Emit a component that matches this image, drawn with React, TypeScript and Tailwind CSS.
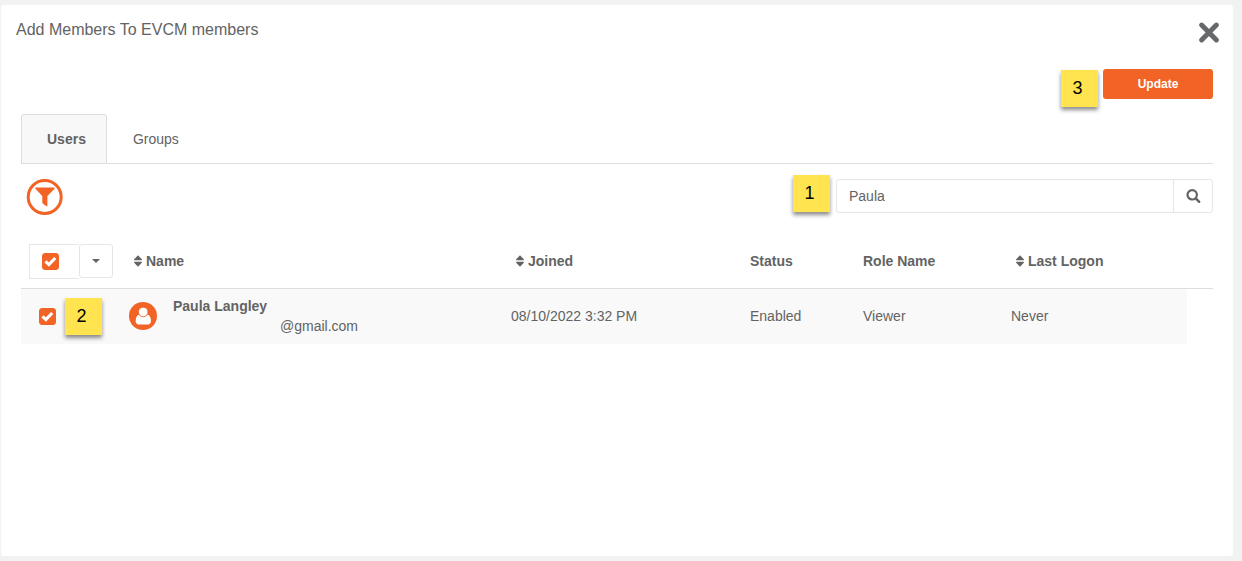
import { useState } from "react";
import type { ReactNode } from "react";

function CloseIcon() {
  return (
    <svg width="30" height="30" viewBox="0 0 30 30" stroke="currentColor" aria-hidden="true">
      <path d="M7.6 7.1L22.4 21.9M22.4 7.1L7.6 21.9" strokeWidth="5" strokeLinecap="round" />
    </svg>
  );
}

function SearchIcon() {
  return (
    <svg width="16" height="16" viewBox="0 0 16 16" fill="none" stroke="currentColor" aria-hidden="true">
      <circle cx="7.2" cy="6.8" r="4.7" strokeWidth="2.2" />
      <path d="M10.8 10.4L14.2 13.8" strokeWidth="2.4" strokeLinecap="round" />
    </svg>
  );
}

function FilterIcon() {
  return (
    <svg width="37" height="37" viewBox="0 0 37 37" aria-hidden="true">
      <circle cx="18.7" cy="18" r="16.5" fill="#fff" stroke="#f26426" strokeWidth="3" />
      <path
        d="M10.1 8.5H27.9C28.7 8.5 29 9.2 28.4 9.9L21.4 17V26.4C21.4 27.3 20.7 27.6 20.1 27.1L16.8 24.6C16.5 24.3 16.3 24 16.3 23.6V17L9.6 9.9C9 9.2 9.3 8.5 10.1 8.5Z"
        fill="#f26426"
      />
    </svg>
  );
}

function SortIcon() {
  return (
    <svg width="8" height="12" viewBox="0 0 8 12" fill="currentColor" aria-hidden="true">
      <path d="M4 0.3L7.8 4.2C8.2 4.7 7.9 5.2 7.4 5.2H0.6C0.1 5.2-0.2 4.7 0.2 4.2Z" />
      <path d="M4 11.7L7.8 7.8C8.2 7.3 7.9 6.8 7.4 6.8H0.6C0.1 6.8-0.2 7.3 0.2 7.8Z" />
    </svg>
  );
}

function AvatarIcon() {
  return (
    <svg width="28" height="28" viewBox="0 0 28 28" className="shrink-0" aria-hidden="true">
      <circle cx="14" cy="14" r="14" fill="#f26426" />
      <path
        d="M10 12.8C7.6 13.2 6.7 16.2 6.7 19.2C6.7 21.2 7.9 22.4 9.5 22.4H19.1C20.7 22.4 21.9 21.2 21.9 19.2C21.9 16.2 21 13.2 18.6 12.8Z"
        fill="#fff"
      />
      <circle cx="14.2" cy="10" r="4.8" fill="#fff" stroke="#f26426" strokeWidth="0.9" />
    </svg>
  );
}

function Note({ children }: { children: ReactNode }) {
  return (
    <span className="flex size-[37px] shrink-0 items-center justify-center bg-[#ffe44f] pr-1 pb-px text-lg leading-5 text-black shadow-[0_3px_4px_rgba(0,0,0,0.45)]">
      {children}
    </span>
  );
}

type CheckProps = {
  label: string;
  checked: boolean;
  onChange: (checked: boolean) => void;
};

function Check({ label, checked, onChange }: CheckProps) {
  return (
    <label className="relative block size-[17px] shrink-0">
      <input
        type="checkbox"
        aria-label={label}
        checked={checked}
        onChange={(e) => onChange(e.target.checked)}
        className="peer block size-full appearance-none rounded-[3px] border border-[#f26426] bg-white checked:bg-[#f26426]"
      />
      <svg
        viewBox="0 0 17 17"
        fill="none"
        className="pointer-events-none absolute inset-0 hidden peer-checked:block"
        aria-hidden="true"
      >
        <path d="M3.5 8.4L6.9 11.6L13.2 5" stroke="#fff" strokeWidth="3.2" />
      </svg>
    </label>
  );
}

function SortHeader({ children }: { children: ReactNode }) {
  return (
    <button type="button" className="flex items-center gap-1 px-[5px] font-bold">
      <SortIcon />
      {children}
    </button>
  );
}

const members = [
  {
    name: "Paula Langley",
    email: "@gmail.com",
    joined: "08/10/2022 3:32 PM",
    status: "Enabled",
    role: "Viewer",
    lastLogon: "Never",
  },
];

export default function App() {
  const [query, setQuery] = useState("Paula");
  const [selected, setSelected] = useState(true);

  return (
    <div className="flex min-h-screen flex-col bg-[#f2f2f2] pt-[5px] pr-[9px] pb-[5px] pl-px font-['Liberation_Sans',Arial,sans-serif] text-sm leading-5 text-[#636363]">
      <main className="flex-1 rounded-[3px] bg-white">
        <header className="flex items-start justify-between pt-3 pr-[9px] pl-[15px]">
          <h1 className="pt-px text-base leading-6">Add Members To EVCM members</h1>
          <button type="button" aria-label="Close" className="mt-px text-[#666869]">
            <CloseIcon />
          </button>
        </header>

        <div className="px-5 pt-[21px]">
          <div className="flex items-start justify-end gap-[5px]">
            <div className="pt-px">
              <Note>3</Note>
            </div>
            <button type="button" className="h-[30px] w-[110px] rounded-[3px] bg-[#f26426] text-xs font-bold text-white">
              Update
            </button>
          </div>

          {/* Tabs */}
          <div role="tablist" className="mt-[7px] flex border-b border-[#dddddd]">
            <button
              type="button"
              role="tab"
              aria-selected="true"
              className="-mb-px h-[50px] rounded-t-[3px] border border-[#dddddd] bg-[#f8f8f8] pr-5 pl-[25px] font-bold"
            >
              Users
            </button>
            <button type="button" role="tab" aria-selected="false" className="px-[26px]">
              Groups
            </button>
          </div>

          {/* Filter and search */}
          <div className="flex items-start justify-between pt-[11px]">
            <button type="button" aria-label="Filter" className="mt-1 ml-[5px]">
              <FilterIcon />
            </button>
            <div className="flex items-start gap-[6px]">
              <Note>1</Note>
              <form role="search" className="mt-1 flex h-[34px] w-[377px]" onSubmit={(e) => e.preventDefault()}>
                <input
                  type="text"
                  aria-label="Search members"
                  value={query}
                  onChange={(e) => setQuery(e.target.value)}
                  className="min-w-0 flex-1 rounded-l-[3px] border border-[#e5e6e7] px-3 outline-none"
                />
                <button
                  type="submit"
                  aria-label="Search"
                  className="-ml-px flex w-10 items-center justify-center rounded-r-[3px] border border-[#e5e6e7]"
                >
                  <SearchIcon />
                </button>
              </form>
            </div>
          </div>

          {/* Members */}
          <table className="mt-[19px] w-full table-fixed text-left">
            <colgroup>
              <col className="w-[100px]" />
              <col />
              <col className="w-[239px]" />
              <col className="w-[113px]" />
              <col className="w-[148px]" />
              <col className="w-[184px]" />
              <col className="w-[26px]" />
            </colgroup>
            <thead>
              <tr className="h-[53px] border-b border-[#dddddd]">
                <th className="pl-2">
                  <div className="flex items-start">
                    <div className="flex h-[35px] w-[50px] items-center border border-r-0 border-[#e5e6e7] pl-3">
                      <Check label="Select all" checked={selected} onChange={setSelected} />
                    </div>
                    <button
                      type="button"
                      aria-label="Selection options"
                      className="flex h-[34px] w-[34px] items-center justify-center rounded-[3px] border border-[#e5e6e7]"
                    >
                      <svg width="8" height="4" viewBox="0 0 8 4" fill="currentColor" aria-hidden="true">
                        <path d="M0 0H8L4 4Z" />
                      </svg>
                    </button>
                  </div>
                </th>
                <th className="px-2">
                  <SortHeader>Name</SortHeader>
                </th>
                <th className="px-2">
                  <SortHeader>Joined</SortHeader>
                </th>
                <th className="px-2">Status</th>
                <th className="px-2">Role Name</th>
                <th className="px-2">
                  <SortHeader>Last Logon</SortHeader>
                </th>
                <td />
              </tr>
            </thead>
            <tbody>
              {members.map((member) => (
                <tr key={member.name} className="h-14">
                  <td className="bg-[#f9f9f9] pl-[18px]">
                    <div className="flex items-center gap-[9px]">
                      <Check label={`Select ${member.name}`} checked={selected} onChange={setSelected} />
                      <Note>2</Note>
                    </div>
                  </td>
                  <td className="bg-[#f9f9f9] px-2">
                    <div className="flex items-center gap-4">
                      <AvatarIcon />
                      <div>
                        <div className="font-bold">{member.name}</div>
                        <div className="pl-[107px]">{member.email}</div>
                      </div>
                    </div>
                  </td>
                  <td className="bg-[#f9f9f9] px-2">{member.joined}</td>
                  <td className="bg-[#f9f9f9] px-2">{member.status}</td>
                  <td className="bg-[#f9f9f9] px-2">{member.role}</td>
                  <td className="bg-[#f9f9f9] px-2">{member.lastLogon}</td>
                  <td />
                </tr>
              ))}
            </tbody>
          </table>
        </div>
      </main>
    </div>
  );
}
